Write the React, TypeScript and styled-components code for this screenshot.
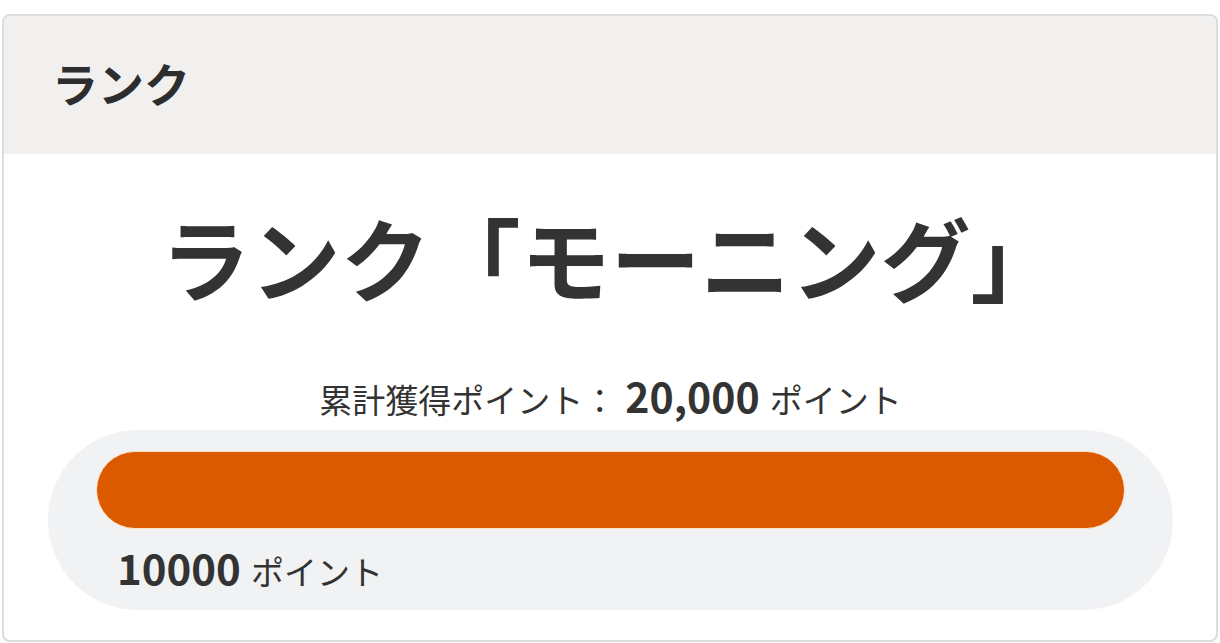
import React from "react";
import styled, { createGlobalStyle } from "styled-components";

const GlobalStyle = createGlobalStyle`
  html, body {
    margin: 0;
    padding: 0;
    background: #ffffff;
  }
  body {
    font-family: "Noto Sans CJK JP", "Noto Sans", sans-serif;
    color: #333333;
  }
`;

const Page = styled.div`
  padding: 14px 2px 0 2px;
`;

const Card = styled.section`
  border: 2px solid #dcdcdc;
  border-radius: 8px;
  overflow: hidden;
  background: #ffffff;
  height: 628px;
  box-sizing: border-box;
  display: flex;
  flex-direction: column;
`;

const CardHeader = styled.header`
  background: #f1f0ef;
  height: 138px;
  display: flex;
  align-items: center;
  padding-left: 48px;
  flex-shrink: 0;
`;

const HeaderTitle = styled.h2`
  margin: 0;
  font-size: 46px;
  font-weight: 700;
  color: #2d2d2d;
  line-height: 1;
  padding-bottom: 6px;
`;

const CardBody = styled.div`
  display: flex;
  flex-direction: column;
  align-items: center;
  padding: 48px 43px 0 44px;
`;

const RankName = styled.h1`
  margin: 0;
  font-size: 90px;
  font-weight: 700;
  line-height: 1.2;
  color: #333333;
  white-space: nowrap;
`;

const TotalLine = styled.p`
  margin: 61px 0 0 0;
  display: flex;
  align-items: baseline;
  font-size: 33px;
  line-height: 1.2;
  color: #333333;
`;

const Num = styled.span`
  font-size: 41px;
  font-weight: 700;
  margin: 0 10px 0 9px;
`;

const ProgressTrack = styled.div`
  align-self: stretch;
  margin-top: 10px;
  height: 180px;
  border-radius: 90px;
  background: #f1f2f4;
  box-sizing: border-box;
  padding: 21px 48px 0 48px;
  display: flex;
  flex-direction: column;
`;

const Bar = styled.div`
  height: 78px;
  flex-shrink: 0;
  border-radius: 39px;
  background: #db5a00;
  border: 1px solid #ffe2c6;
  box-sizing: border-box;
`;

const Goal = styled.p`
  margin: 13px 0 0 21px;
  display: flex;
  align-items: baseline;
  font-size: 33px;
  line-height: 1.2;
  color: #333333;
`;

const GoalNum = styled.span`
  font-size: 42px;
  font-weight: 700;
  margin-right: 10px;
`;

export default function App() {
  const current = 20000;
  const goal = 10000;
  const pct = Math.min(100, (current / goal) * 100);

  return (
    <Page>
      <GlobalStyle />
      <Card>
        <CardHeader>
          <HeaderTitle>ランク</HeaderTitle>
        </CardHeader>
        <CardBody>
          <RankName>ランク「モーニング」</RankName>
          <TotalLine>
            累計獲得ポイント：<Num>{current.toLocaleString("en-US")}</Num>ポイント
          </TotalLine>
          <ProgressTrack>
            <Bar style={{ width: `${pct}%` }} />
            <Goal>
              <GoalNum>{goal}</GoalNum>ポイント
            </Goal>
          </ProgressTrack>
        </CardBody>
      </Card>
    </Page>
  );
}
